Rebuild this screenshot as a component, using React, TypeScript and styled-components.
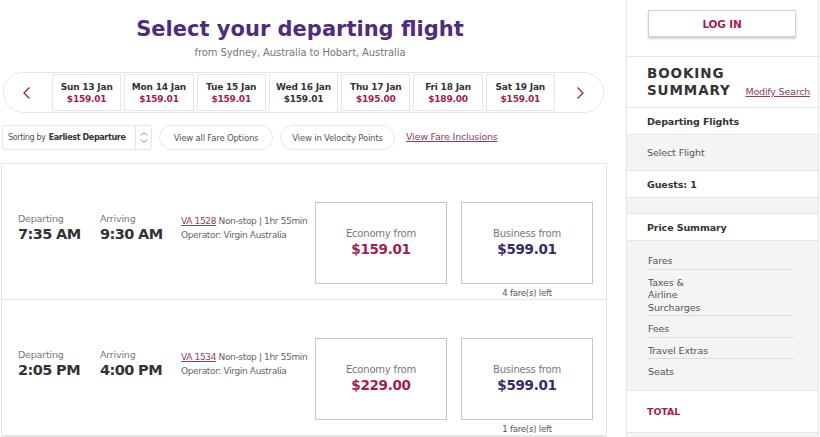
import { FC } from 'react';
import styled, { createGlobalStyle } from 'styled-components';

const COLOR_PURPLE = '#4e2c80';
const COLOR_RED = '#a31d52';
const COLOR_DARK_PURPLE = '#3d2a6a';
const COLOR_TEXT = '#333333';
const COLOR_MUTED = '#777777';
const COLOR_LINK = '#8e3e67';
const COLOR_BORDER = '#e6e6e6';
const COLOR_GREY_BG = '#f4f4f4';

const GlobalStyle = createGlobalStyle`
  html, body {
    margin: 0;
    padding: 0;
    background: #ffffff;
    font-family: 'DejaVu Sans', 'Open Sans', sans-serif;
    color: ${COLOR_TEXT};
  }
  * {
    box-sizing: border-box;
  }
`;

const StyledPage = styled.div`
  display: flex;
  width: 820px;
  height: 437px;
  overflow: hidden;
`;

const StyledMain = styled.main`
  width: 607px;
  display: flex;
  flex-direction: column;
  padding-left: 1px;
`;

const StyledHeader = styled.header`
  display: flex;
  flex-direction: column;
  align-items: center;
  padding: 16px 8px 0 0;
`;

const StyledTitle = styled.h1`
  margin: 0;
  font-size: 21px;
  line-height: 27px;
  font-weight: 700;
  color: ${COLOR_PURPLE};
`;

const StyledSubtitle = styled.p`
  margin: 3px 0 0;
  font-size: 10px;
  line-height: 13px;
  color: ${COLOR_MUTED};
  letter-spacing: -0.1px;
`;

const StyledDateStrip = styled.div`
  margin: 13px 0 0 2px;
  height: 42px;
  width: 601px;
  display: flex;
  align-items: stretch;
  gap: 3px;
  border: 1px solid ${COLOR_BORDER};
  border-radius: 22px;
  overflow: hidden;
`;

const StyledArrow = styled.button`
  width: 45px;
  flex: none;
  border: none;
  background: #ffffff;
  display: flex;
  align-items: center;
  justify-content: center;
  padding: 0;
  cursor: pointer;
`;

const StyledDateCell = styled.div<{ selected?: boolean }>`
  flex: 1;
  display: flex;
  flex-direction: column;
  align-items: center;
  justify-content: center;
  border-left: 1px solid ${COLOR_BORDER};
  border-right: 1px solid ${COLOR_BORDER};
  border-top: ${({ selected }) => (selected ? 'none' : `1px solid ${COLOR_BORDER}`)};
  border-bottom: ${({ selected }) => (selected ? 'none' : `1px solid ${COLOR_BORDER}`)};
  margin: ${({ selected }) => (selected ? '0' : '1px 0')};
  background: #ffffff;
`;

const StyledDateDay = styled.span`
  font-size: 9px;
  line-height: 12px;
  font-weight: 700;
  letter-spacing: -0.2px;
  color: ${COLOR_TEXT};
`;

const StyledDatePrice = styled.span<{ selected?: boolean }>`
  font-size: 9px;
  line-height: 12px;
  font-weight: 700;
  letter-spacing: -0.2px;
  color: ${({ selected }) => (selected ? COLOR_TEXT : COLOR_RED)};
`;

const StyledToolbar = styled.div`
  display: flex;
  align-items: center;
  gap: 7px;
  margin: 12px 0 0 1px;
  height: 25px;
`;

const StyledSortSelect = styled.div`
  width: 150px;
  height: 25px;
  display: flex;
  align-items: center;
  border: 1px solid ${COLOR_BORDER};
  border-radius: 3px;
  font-size: 8px;
  letter-spacing: -0.35px;
  white-space: nowrap;
  color: #555555;
  padding-left: 5px;

  b {
    color: ${COLOR_TEXT};
    margin-left: 3px;
  }
`;

const StyledSortIcon = styled.span`
  margin-left: auto;
  width: 16px;
  height: 100%;
  border-left: 1px solid ${COLOR_BORDER};
  display: flex;
  align-items: center;
  justify-content: center;
`;

const StyledPill = styled.button<{ width: number }>`
  width: ${({ width }) => width}px;
  height: 25px;
  border: 1px solid ${COLOR_BORDER};
  border-radius: 13px;
  background: #ffffff;
  font-family: inherit;
  font-size: 8.5px;
  letter-spacing: -0.2px;
  color: #555555;
  padding: 0;
`;

const StyledLink = styled.a`
  color: ${COLOR_LINK};
  text-decoration: underline;
  font-size: 9.5px;
  letter-spacing: -0.2px;
  margin-left: 4px;
  margin-top: -2px;
`;

const StyledFlightList = styled.div`
  margin-top: 13px;
  border: 1px solid ${COLOR_BORDER};
  width: 606px;
`;

const StyledFlightRow = styled.div`
  height: 136px;
  display: flex;
  align-items: flex-start;
  padding: 38px 0 0 16px;
  border-bottom: 1px solid ${COLOR_BORDER};
`;

const StyledTimeBlock = styled.div<{ width: number }>`
  width: ${({ width }) => width}px;
  display: flex;
  flex-direction: column;
  margin-top: 11px;
`;

const StyledTimeLabel = styled.span`
  font-size: 9.5px;
  line-height: 12px;
  letter-spacing: -0.2px;
  color: ${COLOR_MUTED};
`;

const StyledTime = styled.span<{ weight: number }>`
  font-size: 14.5px;
  line-height: 18px;
  font-weight: ${({ weight }) => weight};
  letter-spacing: -0.6px;
  color: ${COLOR_TEXT};
`;

const StyledFlightInfo = styled.div`
  width: 134px;
  display: flex;
  flex-direction: column;
  font-size: 9px;
  line-height: 14px;
  letter-spacing: -0.35px;
  color: #666666;
  margin-top: 12px;
  white-space: nowrap;

  a {
    color: ${COLOR_LINK};
    text-decoration: underline;
  }
`;

const StyledFares = styled.div`
  display: flex;
  gap: 14px;
`;

const StyledFareColumn = styled.div`
  display: flex;
  flex-direction: column;
  align-items: center;
`;

const StyledFareBox = styled.button`
  width: 132px;
  height: 82px;
  border: 1px solid #ccc3c9;
  background: #ffffff;
  display: flex;
  flex-direction: column;
  align-items: center;
  justify-content: center;
  padding: 0 0 2px;
  font-family: inherit;
  cursor: pointer;
`;

const StyledFareLabel = styled.span`
  font-size: 10px;
  line-height: 15px;
  letter-spacing: -0.2px;
  color: ${COLOR_MUTED};
`;

const StyledFarePrice = styled.span<{ color: string }>`
  font-size: 13.5px;
  line-height: 17px;
  font-weight: 700;
  letter-spacing: -0.3px;
  color: ${({ color }) => color};
`;

const StyledFaresLeft = styled.span`
  margin-top: 4px;
  font-size: 8.5px;
  line-height: 11px;
  letter-spacing: -0.2px;
  color: #555555;
`;

const StyledSidebar = styled.aside`
  margin-left: 19px;
  width: 193px;
  border-left: 1px solid ${COLOR_BORDER};
  border-right: 1px solid ${COLOR_BORDER};
  background: ${COLOR_GREY_BG};
  display: flex;
  flex-direction: column;
`;

const StyledLoginSection = styled.div`
  height: 57px;
  flex: none;
  background: #ffffff;
  border-bottom: 1px solid ${COLOR_BORDER};
  padding: 10px 0 0 21px;
`;

const StyledSideSection = styled.div<{ grey?: boolean; height: number }>`
  height: ${({ height }) => height}px;
  background: ${({ grey }) => (grey ? COLOR_GREY_BG : '#ffffff')};
  border-bottom: 1px solid ${COLOR_BORDER};
  padding: 0 20px;
  display: flex;
  flex-direction: column;
  justify-content: center;
  flex: none;
`;

const StyledLoginButton = styled.button`
  width: 148px;
  height: 27px;
  border: 1px solid #d5d0d3;
  background: #ffffff;
  box-shadow: 0 2px 2px rgba(0, 0, 0, 0.18);
  color: ${COLOR_RED};
  font-family: inherit;
  font-size: 10.5px;
  font-weight: 700;
  letter-spacing: -0.2px;
`;

const StyledSummaryHead = styled.div`
  display: flex;
  align-items: flex-end;
  justify-content: space-between;
`;

const StyledSummaryTitle = styled.h2`
  margin: 0;
  font-size: 13.5px;
  line-height: 17px;
  font-weight: 700;
  letter-spacing: 0.9px;
  color: ${COLOR_TEXT};
`;

const StyledModify = styled.a`
  font-size: 9.5px;
  letter-spacing: -0.2px;
  color: ${COLOR_LINK};
  text-decoration: underline;
  margin-bottom: 2px;
  margin-right: -12px;
`;

const StyledSideHeading = styled.span<{ color?: string }>`
  font-size: 9.5px;
  font-weight: 700;
  letter-spacing: -0.1px;
  color: ${({ color }) => color || COLOR_TEXT};
`;

const StyledSideText = styled.span`
  font-size: 9.5px;
  letter-spacing: -0.1px;
  color: #555555;
`;

const StyledPriceList = styled.div`
  flex: none;
  height: 150px;
  padding: 7px 24px 0 21px;
  border-bottom: 1px solid ${COLOR_BORDER};
  display: flex;
  flex-direction: column;
`;

const StyledPriceItem = styled.div<{ last?: boolean }>`
  padding: 7px 0 1px;
  border-bottom: ${({ last }) => (last ? 'none' : '1px solid #dcdcdc')};
  font-size: 9.5px;
  line-height: 12.5px;
  letter-spacing: -0.1px;
  color: #555555;

  span {
    display: block;
    width: 60px;
  }
`;

const ChevronLeft: FC = () => (
  <svg width='10' height='14' viewBox='0 0 10 14' fill='none'>
    <path d='M7.5 1.5 L2 7 L7.5 12.5' stroke={COLOR_RED} strokeWidth='1.3' />
  </svg>
);

const ChevronRight: FC = () => (
  <svg width='10' height='14' viewBox='0 0 10 14' fill='none'>
    <path d='M2.5 1.5 L8 7 L2.5 12.5' stroke={COLOR_RED} strokeWidth='1.3' />
  </svg>
);

const SortIcon: FC = () => (
  <svg width='8' height='13' viewBox='0 0 8 13' fill='none'>
    <path d='M1 4.5 L4 1.5 L7 4.5' stroke='#777' strokeWidth='0.9' />
    <path d='M1 8.5 L4 11.5 L7 8.5' stroke='#777' strokeWidth='0.9' />
  </svg>
);

const dates = [
  { day: 'Sun 13 Jan', price: '$159.01' },
  { day: 'Mon 14 Jan', price: '$159.01' },
  { day: 'Tue 15 Jan', price: '$159.01' },
  { day: 'Wed 16 Jan', price: '$159.01', selected: true },
  { day: 'Thu 17 Jan', price: '$195.00' },
  { day: 'Fri 18 Jan', price: '$189.00' },
  { day: 'Sat 19 Jan', price: '$159.01' },
];

const flights = [
  {
    depart: '7:35 AM',
    arrive: '9:30 AM',
    code: 'VA 1528',
    economy: '$159.01',
    business: '$599.01',
    left: '4 fare(s) left',
    weight: 700,
  },
  {
    depart: '2:05 PM',
    arrive: '4:00 PM',
    code: 'VA 1534',
    economy: '$229.00',
    business: '$599.01',
    left: '1 fare(s) left',
    weight: 600,
  },
];

const App: FC = () => {
  return (
    <>
      <GlobalStyle />
      <StyledPage>
        <StyledMain>
          <StyledHeader>
            <StyledTitle>Select your departing flight</StyledTitle>
            <StyledSubtitle>from Sydney, Australia to Hobart, Australia</StyledSubtitle>
          </StyledHeader>

          <StyledDateStrip>
            <StyledArrow aria-label='Previous dates'>
              <ChevronLeft />
            </StyledArrow>
            {dates.map((d) => (
              <StyledDateCell key={d.day} selected={d.selected}>
                <StyledDateDay>{d.day}</StyledDateDay>
                <StyledDatePrice selected={d.selected}>{d.price}</StyledDatePrice>
              </StyledDateCell>
            ))}
            <StyledArrow aria-label='Next dates'>
              <ChevronRight />
            </StyledArrow>
          </StyledDateStrip>

          <StyledToolbar>
            <StyledSortSelect>
              Sorting by<b>Earliest Departure</b>
              <StyledSortIcon>
                <SortIcon />
              </StyledSortIcon>
            </StyledSortSelect>
            <StyledPill width={114}>View all Fare Options</StyledPill>
            <StyledPill width={115}>View in Velocity Points</StyledPill>
            <StyledLink href='#'>View Fare Inclusions</StyledLink>
          </StyledToolbar>

          <StyledFlightList>
            {flights.map((f) => (
              <StyledFlightRow key={f.code}>
                <StyledTimeBlock width={82}>
                  <StyledTimeLabel>Departing</StyledTimeLabel>
                  <StyledTime weight={f.weight}>{f.depart}</StyledTime>
                </StyledTimeBlock>
                <StyledTimeBlock width={81}>
                  <StyledTimeLabel>Arriving</StyledTimeLabel>
                  <StyledTime weight={f.weight}>{f.arrive}</StyledTime>
                </StyledTimeBlock>
                <StyledFlightInfo>
                  <span>
                    <a href='#'>{f.code}</a> Non-stop | 1hr 55min
                  </span>
                  <span>Operator: Virgin Australia</span>
                </StyledFlightInfo>
                <StyledFares>
                  <StyledFareColumn>
                    <StyledFareBox>
                      <StyledFareLabel>Economy from</StyledFareLabel>
                      <StyledFarePrice color={COLOR_RED}>{f.economy}</StyledFarePrice>
                    </StyledFareBox>
                  </StyledFareColumn>
                  <StyledFareColumn>
                    <StyledFareBox>
                      <StyledFareLabel>Business from</StyledFareLabel>
                      <StyledFarePrice color={COLOR_DARK_PURPLE}>{f.business}</StyledFarePrice>
                    </StyledFareBox>
                    <StyledFaresLeft>{f.left}</StyledFaresLeft>
                  </StyledFareColumn>
                </StyledFares>
              </StyledFlightRow>
            ))}
          </StyledFlightList>
        </StyledMain>

        <StyledSidebar>
          <StyledLoginSection>
            <StyledLoginButton>LOG IN</StyledLoginButton>
          </StyledLoginSection>
          <StyledSideSection height={51}>
            <StyledSummaryHead>
              <StyledSummaryTitle>
                BOOKING
                <br />
                SUMMARY
              </StyledSummaryTitle>
              <StyledModify href='#'>Modify Search</StyledModify>
            </StyledSummaryHead>
          </StyledSideSection>
          <StyledSideSection height={27}>
            <StyledSideHeading>Departing Flights</StyledSideHeading>
          </StyledSideSection>
          <StyledSideSection grey height={36}>
            <StyledSideText>Select Flight</StyledSideText>
          </StyledSideSection>
          <StyledSideSection height={27}>
            <StyledSideHeading>Guests: 1</StyledSideHeading>
          </StyledSideSection>
          <StyledSideSection grey height={16} />
          <StyledSideSection height={27}>
            <StyledSideHeading>Price Summary</StyledSideHeading>
          </StyledSideSection>
          <StyledPriceList>
            <StyledPriceItem>
              <span>Fares</span>
            </StyledPriceItem>
            <StyledPriceItem>
              <span>Taxes &amp; Airline Surcharges</span>
            </StyledPriceItem>
            <StyledPriceItem>
              <span>Fees</span>
            </StyledPriceItem>
            <StyledPriceItem>
              <span>Travel Extras</span>
            </StyledPriceItem>
            <StyledPriceItem last>
              <span>Seats</span>
            </StyledPriceItem>
          </StyledPriceList>
          <StyledSideSection height={42}>
            <StyledSideHeading color={COLOR_RED}>TOTAL</StyledSideHeading>
          </StyledSideSection>
        </StyledSidebar>
      </StyledPage>
    </>
  );
};

export default App;
